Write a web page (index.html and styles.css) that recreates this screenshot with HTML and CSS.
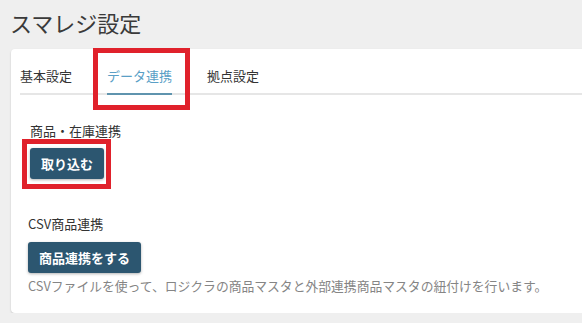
FILE: index.html
```html
<!DOCTYPE html>
<html lang="ja">
<head>
<meta charset="utf-8">
<link rel="stylesheet" href="styles.css">
</head>
<body>
<h1 class="title">スマレジ設定</h1>
<div class="card">
  <nav class="tabs">
    <span class="tab">基本設定</span>
    <span class="tab active">データ連携</span>
    <span class="tab">拠点設定</span>
  </nav>
  <section class="section first">
    <div class="label">商品・在庫連携</div>
    <button class="btn">取り込む</button>
  </section>
  <section class="section second">
    <div class="label">CSV商品連携</div>
    <button class="btn">商品連携をする</button>
    <p class="desc">CSVファイルを使って、ロジクラの商品マスタと外部連携商品マスタの紐付けを行います。</p>
  </section>
  <div class="mark mark-tab"></div>
  <div class="mark mark-btn"></div>
</div>
</body>
</html>
```
FILE: styles.css
```css
html, body {
  margin: 0;
  padding: 0;
}
body {
  background: #efefef;
  font-family: "Noto Sans CJK JP", "Noto Sans", sans-serif;
  color: #333;
  overflow: hidden;
}
.title {
  margin: 0;
  padding: 0 0 4px 10px;
  height: 45px;
  line-height: 45px;
  font-size: 22px;
  font-weight: 400;
  color: #3a3a3a;
}
.card {
  position: relative;
  margin: 0 -10px 0 11px;
  height: 264px;
  box-sizing: border-box;
  background: #fff;
  border-radius: 4px;
  box-shadow: 0 1px 2px rgba(0, 0, 0, 0.18);
}
.tabs {
  display: flex;
  gap: 35px;
  margin-left: 9px;
  padding-top: 18px;
  border-bottom: 2px solid #e6e6e6;
}
.tab {
  font-size: 13px;
  line-height: 18px;
  padding-bottom: 8px;
  margin-bottom: -2px;
  border-bottom: 2px solid transparent;
  color: #333;
}
.tab.active {
  color: #5a9fc6;
  border-bottom-color: #5f94ae;
}
.section.first {
  padding: 27px 0 0 19px;
}
.section.second {
  padding: 36px 0 0 17px;
}
.label {
  font-size: 13px;
  line-height: 18px;
  margin-bottom: 8px;
  color: #333;
}
.second .label {
  margin-bottom: 9px;
}
.btn {
  display: block;
  height: 31px;
  padding: 0 11px;
  border: 0;
  border-radius: 3px;
  background: #2c5670;
  color: #fff;
  font-family: inherit;
  font-size: 13px;
  font-weight: 700;
  line-height: 31px;
  box-shadow: 0 1px 3px rgba(0, 0, 0, 0.3);
}
.desc {
  margin: 4px 0 0;
  font-size: 12.8px;
  line-height: 18px;
  color: #858585;
}
.mark {
  position: absolute;
  border: 5px solid #e0212b;
  box-sizing: border-box;
}
.mark-tab {
  left: 82px;
  top: -1px;
  width: 97px;
  height: 62px;
}
.mark-btn {
  left: 11px;
  top: 90px;
  width: 89px;
  height: 50px;
}
```
